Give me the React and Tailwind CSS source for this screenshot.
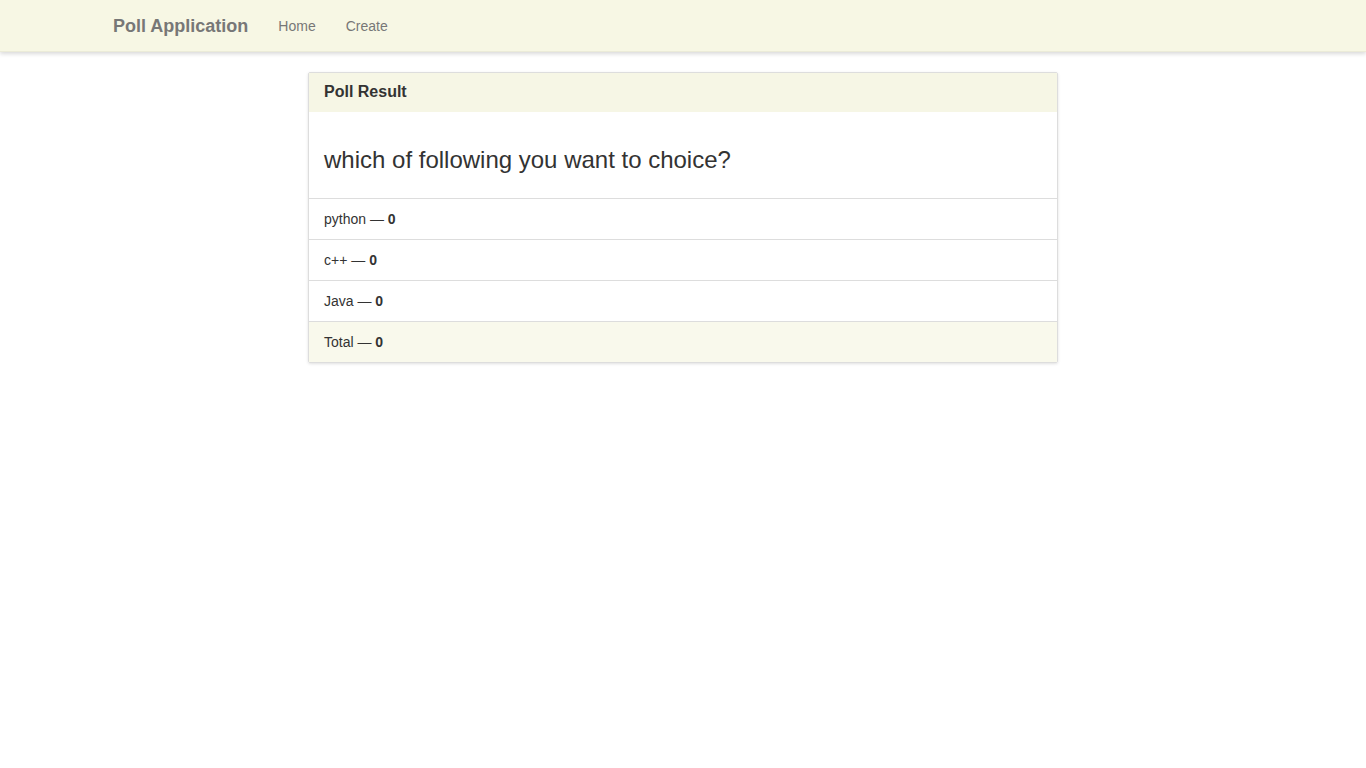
export default function App() {
  const choices = [
    { name: 'python', votes: 0 },
    { name: 'c++', votes: 0 },
    { name: 'Java', votes: 0 },
  ]

  return (
    <div className="min-h-screen bg-white text-[#333] text-[14px] leading-[20px]" style={{ fontFamily: '"Liberation Sans", Arial, sans-serif' }}>
      <nav className="h-[52px] bg-[#f7f7e4] border-b border-[#ebebd8] shadow-[0_2px_4px_rgba(0,0,0,0.15)]">
        <div className="w-[1170px] mx-auto px-[15px] flex items-center h-[51px]">
          <a className="text-[18px] font-bold text-[#777] pr-[15px]">Poll Application</a>
          <a className="text-[#777] px-[15px]">Home</a>
          <a className="text-[#777] px-[15px]">Create</a>
        </div>
      </nav>

      <div className="w-[750px] mx-auto mt-[20px] border border-[#ddd] rounded-[2px] shadow-[0_1px_3px_rgba(0,0,0,0.12)]">
        <div className="bg-[#f6f6e5] px-[15px] pt-[9px] pb-[11px] h-[39px]">
          <h3 className="text-[16px] font-bold leading-[19px]">Poll Result</h3>
        </div>
        <div className="px-[15px] py-[15px] border-b border-[#ddd]">
          <h3 className="text-[24px] leading-[26.4px] mt-[20px] mb-[10px]">which of following you want to choice?</h3>
        </div>
        {choices.map((c) => (
          <div key={c.name} className="px-[15px] py-[10px] border-b border-[#ddd]">
            {c.name} — <strong>{c.votes}</strong>
          </div>
        ))}
        <div className="px-[15px] py-[10px] bg-[#f9f9ec]">
          Total — <strong>0</strong>
        </div>
      </div>
    </div>
  )
}
